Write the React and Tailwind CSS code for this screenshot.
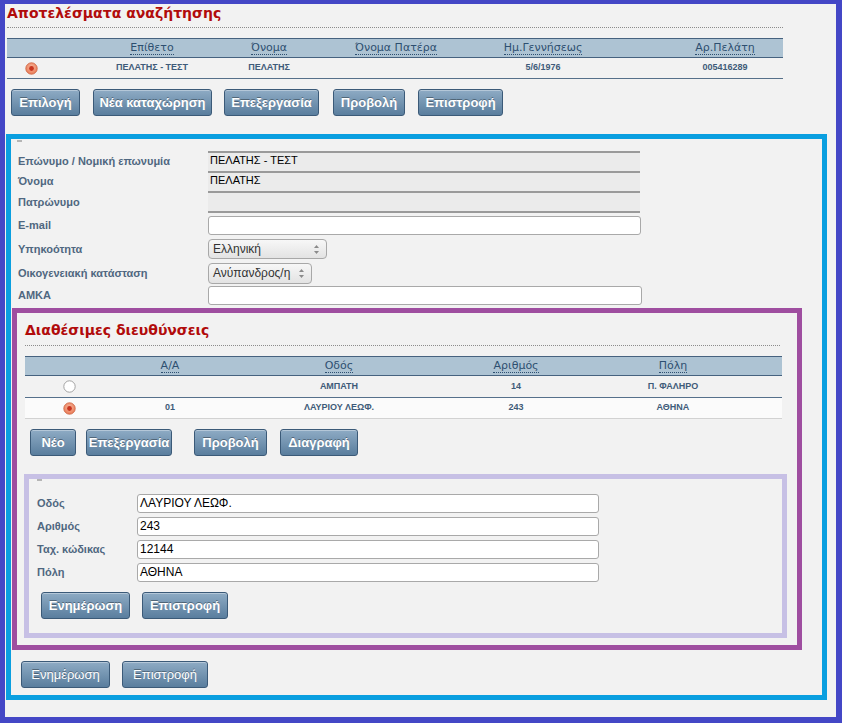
import React from 'react';

const Btn = ({ children, w, cls = '', bold = true }) => (
  <button
    className={`h-[27px] shrink-0 rounded-[3px] border border-[#3b5a78] bg-linear-to-b from-[#8eabc4] to-[#5a7e9e] text-[13px] text-white shadow-[inset_0_1px_0_rgba(255,255,255,0.35)] [text-shadow:0_-1px_0_rgba(0,0,0,0.35)] ${bold ? 'font-bold' : 'font-normal'} ${w} ${cls}`}
  >
    {children}
  </button>
);

const Radio = ({ on }) => (
  <svg width="13" height="13" viewBox="0 0 13 13">
    {on ? (
      <>
        <defs>
          <radialGradient id="rg" cx="50%" cy="40%" r="60%">
            <stop offset="0%" stopColor="#f7b9a0" />
            <stop offset="100%" stopColor="#ea7a55" />
          </radialGradient>
        </defs>
        <circle cx="6.5" cy="6.5" r="5.7" fill="url(#rg)" stroke="#cf6a48" strokeWidth="0.9" />
        <circle cx="6.5" cy="6.5" r="2.4" fill="#c8351f" />
      </>
    ) : (
      <circle cx="6.5" cy="6.5" r="5.7" fill="#ffffff" stroke="#9a9a9a" strokeWidth="0.9" />
    )}
  </svg>
);

const Arrows = () => (
  <svg width="7" height="11" viewBox="0 0 7 11" className="shrink-0">
    <path d="M3.5 1 L6 4 L1 4 Z" fill="#8a8a8a" />
    <path d="M3.5 10 L6 7 L1 7 Z" fill="#8a8a8a" />
  </svg>
);

const Cell = ({ cls, children }) => (
  <div className={`flex shrink-0 justify-center whitespace-nowrap ${cls}`}>{children}</div>
);

const HeadText = ({ children }) => (
  <span className="border-b border-dotted border-[#2d4f70] leading-[13px] text-[11px] text-[#2d4f70] [font-family:'DejaVu_Sans',sans-serif]">
    {children}
  </span>
);

const RowText = ({ children }) => (
  <span className="text-[9px] font-bold text-[#3f5b79]">{children}</span>
);

const topCols = ['w-[48px]', 'ml-[47px] w-[100px]', 'ml-[17px] w-[100px]', 'ml-[27px] w-[100px]', 'ml-[47px] w-[100px]', 'ml-[82px] w-[100px]'];
const addrCols = ['ml-[24px] w-[40px]', 'ml-[31px] w-[100px]', 'ml-[69px] w-[100px]', 'ml-[77px] w-[100px]', 'ml-[57px] w-[100px]'];

const Title = ({ children, cls }) => (
  <div className={`border-b border-dotted border-[#8c8c8c] ${cls}`}>
    <h2 className="text-[14px] font-bold leading-[18px] text-[#b10b0b] [font-family:'DejaVu_Sans',sans-serif]">{children}</h2>
  </div>
);

const Readonly = ({ value, cls = '' }) => (
  <div className={`h-[20px] w-[432px] border-t-2 border-[#9a9a9a] bg-[#ebebeb] px-[2px] text-[11px] leading-[14px] text-black ${cls}`}>
    {value}
  </div>
);

const TextInput = ({ value = '', w }) => (
  <div className={`h-[19px] rounded-[3px] border border-[#a9a9a9] bg-white px-[2px] text-[12px] leading-[17px] text-black ${w}`}>{value}</div>
);

const Select = ({ value, w, h }) => (
  <div className={`flex items-center justify-between rounded-[4px] border border-[#a8a8a8] bg-linear-to-b from-[#f7f7f7] to-[#e3e3e3] pl-[4px] pr-[6px] text-[12px] text-[#333] ${w} ${h}`}>
    <span>{value}</span>
    <Arrows />
  </div>
);

const Label = ({ children, w }) => (
  <div className={`shrink-0 text-[11px] font-bold text-[#4f6780] ${w}`}>{children}</div>
);

export default function App() {
  const formRows = [
    { label: 'Επώνυμο / Νομική επωνυμία', h: 'h-[20px]', ctrl: <Readonly value="ΠΕΛΑΤΗΣ - ΤΕΣΤ" /> },
    { label: 'Όνομα', h: 'h-[20px]', ctrl: <Readonly value="ΠΕΛΑΤΗΣ" /> },
    { label: 'Πατρώνυμο', h: 'h-[22px]', ctrl: <Readonly value="" cls="h-[22px] border-b-2" /> },
    { label: 'E-mail', h: 'h-[24px]', ctrl: <TextInput w="w-[433px]" /> },
    { label: 'Υπηκοότητα', h: 'h-[24px]', ctrl: <Select value="Ελληνική" w="w-[119px]" h="h-[20px]" /> },
    { label: 'Οικογενειακή κατάσταση', h: 'h-[24px]', ctrl: <Select value="Ανύπανδρος/η" w="w-[104px]" h="h-[21px]" /> },
    { label: 'ΑΜΚΑ', h: 'h-[20px]', ctrl: <TextInput w="w-[434px]" /> },
  ];

  const addrFields = [
    ['Οδός', 'ΛΑΥΡΙΟΥ ΛΕΩΦ.'],
    ['Αριθμός', '243'],
    ['Ταχ. κώδικας', '12144'],
    ['Πόλη', 'ΑΘΗΝΑ'],
  ];

  const addresses = [
    { on: false, aa: '', street: 'ΑΜΠΑΤΗ', num: '14', city: 'Π. ΦΑΛΗΡΟ', cls: 'h-[22px] border-b border-[#55708b]' },
    { on: true, aa: '01', street: 'ΛΑΥΡΙΟΥ ΛΕΩΦ.', num: '243', city: 'ΑΘΗΝΑ', cls: 'h-[21px] border-b border-[#d2d2d2] bg-[#fbfbfb]' },
  ];

  return (
    <div className="h-[723px] w-[842px] overflow-hidden border-b-[6px] border-l-[5px] border-r-[6px] border-t-4 border-[#4447c6] bg-[#f2f2f2] [font-family:'Liberation_Sans',Arial,sans-serif]">
      {/* Search results */}
      <div className="pl-[2px]">
        <Title cls="h-[24px] w-[776px]">Αποτελέσματα αναζήτησης</Title>
        <div className="mt-[10px] w-[776px]">
          <div className="flex h-[20px] items-center border-y border-[#46627f] bg-[#adc3d3]">
            {['', 'Επίθετο', 'Όνομα', 'Όνομα Πατέρα', 'Ημ.Γεννήσεως', 'Αρ.Πελάτη'].map((t, i) => (
              <Cell key={i} cls={topCols[i]}>{t && <HeadText>{t}</HeadText>}</Cell>
            ))}
          </div>
          <div className="flex h-[21px] items-center border-b border-[#56708a]">
            <Cell cls={topCols[0]}><Radio on /></Cell>
            <Cell cls={topCols[1]}><RowText>ΠΕΛΑΤΗΣ - ΤΕΣΤ</RowText></Cell>
            <Cell cls={topCols[2]}><RowText>ΠΕΛΑΤΗΣ</RowText></Cell>
            <Cell cls={topCols[3]}><RowText></RowText></Cell>
            <Cell cls={topCols[4]}><RowText>5/6/1976</RowText></Cell>
            <Cell cls={topCols[5]}><RowText>005416289</RowText></Cell>
          </div>
        </div>
        <div className="mt-[10px] flex">
          <Btn w="w-[69px]" cls="ml-[4px]">Επιλογή</Btn>
          <Btn w="w-[119px]" cls="ml-[13px]">Νέα καταχώρηση</Btn>
          <Btn w="w-[95px]" cls="ml-[12px]">Επεξεργασία</Btn>
          <Btn w="w-[72px]" cls="ml-[14px]">Προβολή</Btn>
          <Btn w="w-[85px]" cls="ml-[13px]">Επιστροφή</Btn>
        </div>
      </div>

      {/* Customer fieldset */}
      <div className="ml-[1px] mt-[18px] h-[566px] w-[821px] border-[5px] border-[#0a9fe0]">
        <div className="ml-[6px] mt-[1px] h-[2px] w-[5px] bg-[#b5b5b5]" />
        <div className="mt-[9px] pl-[7px]">
          {formRows.map((r) => (
            <div key={r.label} className={`flex items-center ${r.h}`}>
              <Label w="w-[190px]">{r.label}</Label>
              {r.ctrl}
            </div>
          ))}
        </div>

        {/* Addresses */}
        <div className="ml-[1px] mt-[3px] h-[342px] w-[790px] border-[5px] border-[#9f4ea0]">
          <div className="pl-[8px]">
            <Title cls="mt-[8px] h-[25px] w-[755px]">Διαθέσιμες διευθύνσεις</Title>
            <div className="mt-[10px] w-[757px]">
              <div className="flex h-[20px] items-center border-y border-[#46627f] bg-[#adc3d3]">
                {['', 'Α/Α', 'Οδός', 'Αριθμός', 'Πόλη'].map((t, i) => (
                  <Cell key={i} cls={addrCols[i]}>{t && <HeadText>{t}</HeadText>}</Cell>
                ))}
              </div>
              {addresses.map((a, i) => (
                <div key={i} className={`flex items-center ${a.cls}`}>
                  <Cell cls={addrCols[0]}><Radio on={a.on} /></Cell>
                  <Cell cls={addrCols[1]}><RowText>{a.aa}</RowText></Cell>
                  <Cell cls={addrCols[2]}><RowText>{a.street}</RowText></Cell>
                  <Cell cls={addrCols[3]}><RowText>{a.num}</RowText></Cell>
                  <Cell cls={addrCols[4]}><RowText>{a.city}</RowText></Cell>
                </div>
              ))}
            </div>
            <div className="mt-[10px] flex">
              <Btn w="w-[46px]" cls="ml-[5px]">Νέο</Btn>
              <Btn w="w-[86px]" cls="ml-[10px]">Επεξεργασία</Btn>
              <Btn w="w-[73px]" cls="ml-[22px]">Προβολή</Btn>
              <Btn w="w-[78px]" cls="ml-[13px]">Διαγραφή</Btn>
            </div>
          </div>

          {/* Address edit */}
          <div className="ml-[7px] mt-[18px] h-[164px] w-[763px] border-[5px] border-[#c7c0e5]">
            <div className="ml-[8px] h-[2px] w-[5px] bg-[#b5b5b5]" />
            <div className="mt-[11px] pl-[8px]">
              {addrFields.map(([l, v]) => (
                <div key={l} className="flex h-[23px] items-center">
                  <Label w="w-[100px]">{l}</Label>
                  <TextInput value={v} w="w-[462px]" />
                </div>
              ))}
            </div>
            <div className="mt-[8px] flex">
              <Btn w="w-[89px]" cls="ml-[12px]">Ενημέρωση</Btn>
              <Btn w="w-[86px]" cls="ml-[12px]">Επιστροφή</Btn>
            </div>
          </div>
        </div>

        <div className="mt-[11px] flex">
          <Btn w="w-[89px]" cls="ml-[10px]" bold={false}>Ενημέρωση</Btn>
          <Btn w="w-[86px]" cls="ml-[12px]" bold={false}>Επιστροφή</Btn>
        </div>
      </div>
    </div>
  );
}
